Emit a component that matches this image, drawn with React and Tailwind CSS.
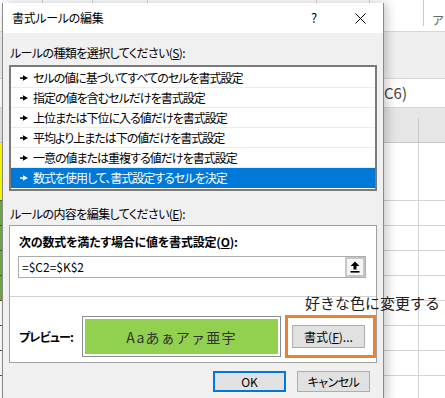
import React from "react";

const items = [
  "セルの値に基づいてすべてのセルを書式設定",
  "指定の値を含むセルだけを書式設定",
  "上位または下位に入る値だけを書式設定",
  "平均より上または下の値だけを書式設定",
  "一意の値または重複する値だけを書式設定",
  "数式を使用して、書式設定するセルを決定",
];

function Arrow({ white }) {
  return (
    <svg width="8" height="6" viewBox="0 0 8 6" className="shrink-0">
      <rect x="0" y="2.3" width="4" height="1.5" fill={white ? "#fff" : "#000"} />
      <polygon points="3,0.3 8,3 3,5.7" fill={white ? "#fff" : "#000"} />
    </svg>
  );
}

const cellRows = [
  { h: "h-[58px]", left: "bg-[#ffff00]" },
  { h: "h-[25px]", left: "bg-[#70ad47]" },
  { h: "h-[25px]", left: "bg-[#70ad47]" },
  { h: "h-[25px]", left: "bg-[#70ad47]" },
  { h: "h-[25px]", left: "bg-[#70ad47]" },
  { h: "h-[25px]", left: "bg-white" },
  { h: "h-[25px]", left: "bg-white" },
  { h: "h-[25px]", left: "bg-white" },
  { h: "h-[25px]", left: "bg-white" },
];

export default function App() {
  return (
    <div className="relative w-[445px] h-[398px] overflow-hidden bg-white font-['Noto_Sans_CJK_JP',sans-serif] text-black">
      {/* background spreadsheet */}
      <div className="flex flex-col w-full">
        <div className="h-[32px] border-b border-[#d6d6d6] bg-white flex items-start">
          <div className="w-[43px] h-[26px] border-r border-[#d4d4d4]" />
          <div className="w-[50px] h-[26px] border-r border-[#d4d4d4]" />
          <div className="w-[55px] h-[26px] border-r border-[#d4d4d4]" />
          <div className="w-[169px] h-[26px] border-r border-[#d4d4d4]" />
          <div className="w-[53px] h-[26px] border-r border-[#d4d4d4]" />
          <div className="w-[54px] h-[26px] border-r border-[#c8c8c8]" />
          <div className="flex-1 h-[26px] pl-[8px] pt-[13px] text-[12px] leading-[14px] text-[#666] overflow-hidden whitespace-nowrap">
            ア
          </div>
        </div>
        <div className="h-[46px] bg-[#efefef]" />
        <div className="h-[30px] border-y border-[#d6d6d6] bg-white pl-[384px] text-[15px] leading-[28px] text-[#444]">
          C6)
        </div>
        <div className="h-[35px] bg-[#e6e6e6] border-b border-[#c8c8c8] flex">
          <div className="w-[418px]" />
          <div className="mt-[10px] w-px bg-[#c8c8c8]" />
        </div>
        {cellRows.map((r, i) => (
          <div key={i} className={`flex ${r.h}`}>
            <div className={`w-[2px] border-b border-[#555] ${r.left}`} />
            <div className="w-[417px] border-b border-r border-[#d4d4d4]" />
            <div className="flex-1 border-b border-[#d4d4d4]" />
          </div>
        ))}
      </div>

      {/* dialog */}
      <div className="absolute left-[2px] top-[3px] w-[382px] h-[400px] border-x border-[#8a8a8a] bg-[#f0f0f0] flex flex-col shadow-[3px_0_10px_rgba(0,0,0,0.22)] [font-feature-settings:'palt']">
        <div className="h-[30px] bg-white flex items-center shrink-0">
          <div className="pl-[9px] text-[12px] leading-[16px] tracking-[-0.3px]">書式ルールの編集</div>
          <div className="ml-auto w-[46px] flex justify-center text-[13px] leading-[16px]">?</div>
          <div className="w-[46px] flex justify-center">
            <svg width="11" height="11" viewBox="0 0 11 11">
              <path d="M0.5 0.5 L10.5 10.5 M10.5 0.5 L0.5 10.5" stroke="#000" strokeWidth="1" />
            </svg>
          </div>
        </div>

        <div className="mt-[12px] pl-[7px] h-[16px] text-[12px] leading-[16px] tracking-[-0.6px]">
          ルールの種類を選択してください(<span className="underline">S</span>):
        </div>

        <div className="mt-[4px] mx-[6px] h-[126px] border-2 border-[#7a7a7a] bg-white py-[1px] flex flex-col">
          {items.map((t, i) => {
            const sel = i === items.length - 1;
            return (
              <div
                key={i}
                className={
                  sel
                    ? "h-[20px] flex items-center pl-[9px] bg-[#0078d7] text-white"
                    : "h-[20px] flex items-center pl-[9px] border-b border-[#ececec]"
                }
              >
                <Arrow white={sel} />
                <span className="ml-[5px] text-[12px] leading-[16px] tracking-[-1px] whitespace-nowrap">{t}</span>
              </div>
            );
          })}
        </div>

        <div className="mt-[15px] pl-[7px] h-[16px] text-[12px] leading-[16px] tracking-[-0.6px]">
          ルールの内容を編集してください(<span className="underline">E</span>):
        </div>

        <div className="mt-[3px] mx-[6px] h-[138px] border border-[#a0a0a0] bg-white flex flex-col">
          <div className="mt-[8px] pl-[9px] h-[16px] text-[12px] leading-[16px] font-bold tracking-[-0.2px]">
            次の数式を満たす場合に値を書式設定(<span className="underline">O</span>):
          </div>
          <div className="mt-[6px] ml-[8px] mr-[10px] h-[22px] border border-[#adadad] flex items-center">
            <div className="pl-[3px] text-[12px] leading-[16px] flex-1">=$C2=$K$2</div>
            <div className="w-[20px] h-[20px] border-2 border-[#c6c6c6] bg-[#f5f5f5] flex items-center justify-center">
              <svg width="10" height="12" viewBox="0 0 10 12">
                <polygon points="5,0.5 9.5,5 6.5,5 6.5,8.5 3.5,8.5 3.5,5 0.5,5" fill="#000" />
                <rect x="0.5" y="10" width="9" height="1.6" fill="#000" />
              </svg>
            </div>
          </div>
          <div className="mt-[18px] border-t border-[#d2d2d2]" />
          <div className="mt-[19px] flex items-center h-[41px]">
            <div className="w-[72px] pl-[9px] text-[12px] leading-[16px] font-bold tracking-[-0.8px]">プレビュー:</div>
            <div className="w-[199px] h-[41px] border border-[#8c8c8c] p-[2px]">
              <div className="w-full h-full bg-[#92d050] flex items-center justify-center text-[14px] leading-[18px] text-[#333] tracking-[1.2px] [font-feature-settings:normal]">
                Aaあぁアァ亜宇
              </div>
            </div>
            <div className="ml-[11px] w-[73px] h-[23px] border border-[#adadad] bg-[#e1e1e1] flex items-center justify-center text-[12px] leading-[16px]">
              書式(<span className="underline">F</span>)...
            </div>
          </div>
        </div>

        <div className="mt-[8px] flex justify-end pr-[13px] gap-[11px]">
          <div className="w-[73px] h-[21px] border-2 border-[#0078d7] bg-[#e1e1e1] flex items-center justify-center text-[12px] leading-[16px]">
            OK
          </div>
          <div className="w-[73px] h-[21px] border border-[#adadad] bg-[#e1e1e1] flex items-center justify-center text-[12px] leading-[16px] tracking-[-0.5px]">
            キャンセル
          </div>
        </div>
      </div>

      {/* annotations */}
      <div className="absolute left-[285px] top-[315px] w-[91px] h-[43px] border-[3px] border-[#f0802a]" />
      <div className="absolute left-[305px] top-[293px] text-[15px] leading-[20px] text-[#222] whitespace-nowrap">
        好きな色に変更する
      </div>
    </div>
  );
}
